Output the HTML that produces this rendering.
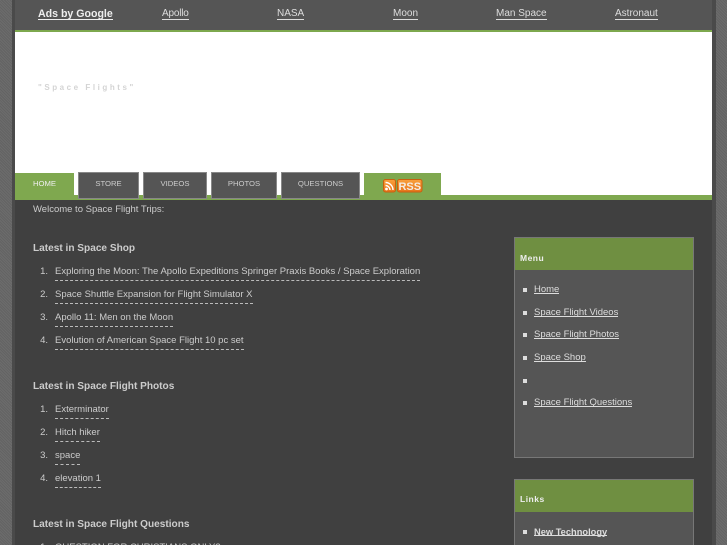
<!DOCTYPE html>
<html style="height:545px;overflow:hidden"><head><meta charset="utf-8">
<style>
html,body{margin:0;padding:0;background:#666;}
body{width:727px;height:545px;overflow:hidden;}
#w{width:727px;height:545px;position:relative;overflow:hidden;font-family:"Liberation Sans",sans-serif;color:#ddd;font-size:9.5px;letter-spacing:0;
background-color:#686868;background-image:repeating-linear-gradient(45deg,#636363 0,#636363 1px,#6c6c6c 1px,#6c6c6c 2px);}
.a{position:absolute;white-space:nowrap;}
.r{position:absolute;}
.top{font-size:10px;top:8px;line-height:12px;height:11px;border-bottom:1px solid #ddd;color:#ddd;}
.tab{position:absolute;top:172px;height:27px;background:#555;border:1px solid #888;box-sizing:border-box;text-align:center;font-size:7.7px;line-height:21px;color:#ccc;}
.l{position:absolute;line-height:12px;border-bottom:1px dashed #bbb;color:#ccc;height:14px;}
.n{position:absolute;line-height:12px;color:#ccc;width:16px;text-align:right;}
.h{position:absolute;font-weight:bold;font-size:10.1px;line-height:14px;color:#ccc;white-space:nowrap;}
.m{position:absolute;left:534px;line-height:12px;border-bottom:1px solid #ddd;color:#ddd;height:9px;}
.b{position:absolute;left:523px;width:4px;height:4px;background:#ddd;}
</style></head><body><div id="w">
<div class="r" style="left:12px;top:0;width:3px;height:545px;background:#4a4a4a"></div>
<div class="r" style="left:712px;top:0;width:4px;height:545px;background:#4a4a4a"></div>
<div class="r" style="left:15px;top:0;width:697px;height:30px;background:#555"></div>
<div class="r" style="left:15px;top:30px;width:697px;height:2px;background:#7da84e"></div>
<div class="r" style="left:15px;top:32px;width:697px;height:163px;background:#fff"></div>
<div class="r" style="left:15px;top:195px;width:697px;height:5px;background:#7fa84f"></div>
<div class="r" style="left:15px;top:200px;width:697px;height:345px;background:#404040"></div>

<div class="a top" style="left:38px;font-weight:bold;font-size:10.6px;color:#eee;border-color:#eee;">Ads by Google</div>
<div class="a top" style="left:162px;letter-spacing:-.2px">Apollo</div>
<div class="a top" style="left:277px">NASA</div>
<div class="a top" style="left:393px">Moon</div>
<div class="a top" style="left:496px">Man Space</div>
<div class="a top" style="left:615px">Astronaut</div>

<div class="a" style="left:38px;top:81px;font-size:8px;font-weight:bold;letter-spacing:2.55px;color:#d4d4d4;line-height:13px">"Space Flights"</div>

<div class="r" style="left:15px;top:173px;width:59px;height:27px;background:#7fa84f;text-align:center;font-size:7.7px;line-height:21px;color:#eee">HOME</div>
<div class="tab" style="left:78px;width:61px">STORE</div>
<div class="tab" style="left:143px;width:64px">VIDEOS</div>
<div class="tab" style="left:211px;width:66px">PHOTOS</div>
<div class="tab" style="left:281px;width:79px">QUESTIONS</div>
<div class="r" style="left:364px;top:173px;width:77px;height:24px;background:#7fa84f"></div>
<svg class="r" style="left:383px;top:179px" width="40" height="14" viewBox="0 0 40 14">
<defs><linearGradient id="g" x1="0" y1="0" x2="0" y2="1"><stop offset="0" stop-color="#f9a03c"/><stop offset="1" stop-color="#e8741a"/></linearGradient></defs>
<rect x=".5" y=".5" width="12" height="12.5" rx="2" fill="url(#g)" stroke="#c9600f"/>
<circle cx="3.5" cy="10" r="1.4" fill="#fff"/>
<path d="M2.5 6.5a4.5 4.5 0 0 1 4.5 4.5M2.5 3.5a7.5 7.5 0 0 1 7.5 7.5" stroke="#fff" stroke-width="1.4" fill="none"/>
<rect x="14.5" y=".5" width="24.5" height="12.5" rx="2" fill="url(#g)" stroke="#c9600f"/>
<text x="26.8" y="10.8" font-family="Liberation Sans" font-weight="bold" font-size="11" fill="#f4ece2" text-anchor="middle">RSS</text>
</svg>

<div class="a" style="left:33px;top:203px;line-height:13px;color:#ccc">Welcome to Space Flight Trips:</div>

<div class="h" style="left:33px;top:242px">Latest in Space Shop</div>
<div class="n" style="left:32px;top:266px">1.</div><div class="a l" style="left:55px;top:266px">Exploring the Moon: The Apollo Expeditions Springer Praxis Books / Space Exploration</div>
<div class="n" style="left:32px;top:289px">2.</div><div class="a l" style="left:55px;top:288.7px">Space Shuttle Expansion for Flight Simulator X</div>
<div class="n" style="left:32px;top:312px">3.</div><div class="a l" style="left:55px;top:311.5px">Apollo 11: Men on the Moon</div>
<div class="n" style="left:32px;top:335px">4.</div><div class="a l" style="left:55px;top:334.5px">Evolution of American Space Flight 10 pc set</div>

<div class="h" style="left:33px;top:380px">Latest in Space Flight Photos</div>
<div class="n" style="left:32px;top:404px">1.</div><div class="a l" style="left:55px;top:404px">Exterminator</div>
<div class="n" style="left:32px;top:427px">2.</div><div class="a l" style="left:55px;top:427px">Hitch hiker</div>
<div class="n" style="left:32px;top:450px">3.</div><div class="a l" style="left:55px;top:450px">space</div>
<div class="n" style="left:32px;top:473px">4.</div><div class="a l" style="left:55px;top:473px">elevation 1</div>

<div class="h" style="left:33px;top:518px">Latest in Space Flight Questions</div>
<div class="n" style="left:32px;top:542px">1.</div><div class="a l" style="left:55px;top:542px">QUESTION FOR CHRISTIANS ONLY?</div>

<div class="r" style="left:514px;top:237px;width:180px;height:221px;background:#555;border:1px solid #777;box-sizing:border-box"></div>
<div class="r" style="left:515px;top:238px;width:178px;height:32px;background:#6f8f41"></div>
<div class="a" style="left:520px;top:252px;font-weight:bold;font-size:8.5px;letter-spacing:.5px;line-height:12px;color:#eee">Menu</div>
<div class="b" style="top:288px"></div><div class="a m" style="top:284px">Home</div>
<div class="b" style="top:311px"></div><div class="a m" style="top:307px">Space Flight Videos</div>
<div class="b" style="top:333px"></div><div class="a m" style="top:329px">Space Flight Photos</div>
<div class="b" style="top:356px"></div><div class="a m" style="top:352px">Space Shop</div>
<div class="b" style="top:379px"></div>
<div class="b" style="top:401px"></div><div class="a m" style="top:397px">Space Flight Questions</div>

<div class="r" style="left:514px;top:479px;width:180px;height:70px;background:#555;border:1px solid #777;box-sizing:border-box"></div>
<div class="r" style="left:515px;top:480px;width:178px;height:32px;background:#6f8f41"></div>
<div class="a" style="left:520px;top:493px;font-weight:bold;font-size:8.5px;letter-spacing:.5px;line-height:12px;color:#eee">Links</div>
<div class="b" style="top:530px"></div><div class="a m" style="top:526px;font-weight:bold;font-size:9.3px">New Technology</div>
</div></body></html>
